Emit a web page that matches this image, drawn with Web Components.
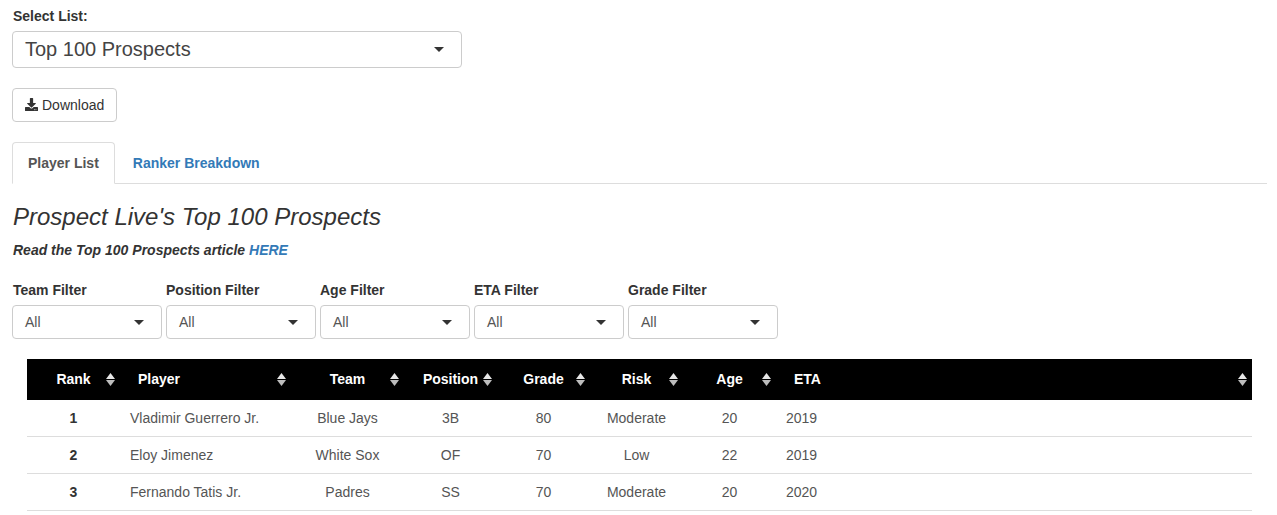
<!DOCTYPE html>
<html lang="en">
<head>
<meta charset="utf-8">
<title>Top 100 Prospects</title>
<style>
  html, body { margin: 0; background: #fff; overflow: hidden; }
  body { font: 14px/20px "Liberation Sans", Arial, sans-serif; color: #333; }
</style>
</head>
<body>
<prospect-app></prospect-app>
<script>
class SelectBox extends HTMLElement {
  constructor() {
    super();
    this.attachShadow({ mode: 'open' });
    const large = this.hasAttribute('large');
    this.shadowRoot.innerHTML = `
      <style>
        :host { display: block; width: ${large ? 450 : 150}px; }
        label { display: block; font-weight: 700; height: 20px; line-height: 20px; margin-bottom: 5px; padding-left: var(--label-inset, 0); color: #333; }
        .box {
          box-sizing: border-box;
          height: ${large ? 37 : 34}px;
          border: 1px solid #ccc;
          border-radius: 4px;
          background: #fff;
          color: ${large ? '#444' : '#555'};
          font-size: ${large ? 20 : 14}px;
          padding: 0 17px 0 12px;
          display: flex;
          align-items: center;
          justify-content: space-between;
        }
        .box span { margin-top: ${large ? -2 : 0}px; }
        .caret { width: 0; height: 0; border: 5px solid transparent; border-top: 5px solid #333; border-bottom: 0; }
      </style>
      <label>${this.getAttribute('label')}</label>
      <div class="box"><span><slot></slot></span><i class="caret"></i></div>
    `;
  }
}
customElements.define('select-box', SelectBox);

class DownloadButton extends HTMLElement {
  constructor() {
    super();
    this.attachShadow({ mode: 'open' });
    this.shadowRoot.innerHTML = `
      <style>
        :host { display: inline-flex; }
        button {
          box-sizing: border-box;
          height: 34px;
          width: 105px;
          padding: 0 0 0 12px;
          display: flex;
          align-items: center;
          gap: 4px;
          font: inherit;
          color: #333;
          background: #fff;
          border: 1px solid #ccc;
          border-radius: 4px;
        }
        svg { width: 13px; height: 13px; fill: #333; margin-top: -2px; }
      </style>
      <button>
        <svg viewBox="0 0 512 512"><path d="M216 0h80c13.3 0 24 10.7 24 24v168h87.7c17.8 0 26.7 21.5 14.1 34.1L269.7 378.3c-7.5 7.5-19.8 7.5-27.3 0L90.1 226.1c-12.6-12.6-3.7-34.1 14.1-34.1H192V24c0-13.3 10.7-24 24-24zm296 376v112c0 13.3-10.7 24-24 24H24c-13.3 0-24-10.7-24-24V376c0-13.3 10.7-24 24-24h146.7l49 49c20.1 20.1 52.5 20.1 72.6 0l49-49H488c13.3 0 24 10.7 24 24zm-124 88c0-11-9-20-20-20s-20 9-20 20 9 20 20 20 20-9 20-20zm64 0c0-11-9-20-20-20s-20 9-20 20 9 20 20 20 20-9 20-20z"></path></svg>
        <slot></slot>
      </button>
    `;
  }
}
customElements.define('download-button', DownloadButton);

class TabBar extends HTMLElement {
  constructor() {
    super();
    this.attachShadow({ mode: 'open' });
    this.shadowRoot.innerHTML = `
      <style>
        :host { display: flex; border-bottom: 1px solid #ddd; height: 41px; font-weight: 700; }
        .tab { box-sizing: border-box; height: 42px; padding: 10px 15px; margin-right: 2px; border: 1px solid transparent; border-radius: 4px 4px 0 0; color: #337ab7; white-space: nowrap; }
        .active { color: #555; background: #fff; border-color: #ddd #ddd #fff; }
      </style>
      <div class="tab active"><slot name="active"></slot></div>
      <div class="tab"><slot name="other"></slot></div>
    `;
  }
}
customElements.define('tab-bar', TabBar);

const COLUMNS = [
  ['Rank', 93], ['Player', 171, 'left'], ['Team', 113], ['Position', 93],
  ['Grade', 93], ['Risk', 93], ['Age', 93], ['ETA', 476, 'left']
];
const ROWS = [
  ['1', 'Vladimir Guerrero Jr.', 'Blue Jays', '3B', '80', 'Moderate', '20', '2019'],
  ['2', 'Eloy Jimenez', 'White Sox', 'OF', '70', 'Low', '22', '2019'],
  ['3', 'Fernando Tatis Jr.', 'Padres', 'SS', '70', 'Moderate', '20', '2020']
];

class PlayerTable extends HTMLElement {
  constructor() {
    super();
    this.attachShadow({ mode: 'open' });
    const sortIcon = `<svg class="sort" viewBox="0 0 9 13"><path fill="#e6e6e6" d="M4.5 0 9 6H0z"/><path fill="#bdbdbd" d="M0 7h9l-4.5 6z"/></svg>`;
    const head = COLUMNS.map(([name, , align]) => `<div class="th ${align || ''}">${name}${sortIcon}</div>`).join('');
    const body = ROWS.map(row => row.map((cell, i) =>
      `<div class="td ${COLUMNS[i][2] || ''} ${i === 0 ? 'rank' : ''}">${cell}</div>`).join('')).join('');
    this.shadowRoot.innerHTML = `
      <style>
        :host { display: block; margin: 0 15px; }
        .grid { display: grid; grid-template-columns: ${COLUMNS.map(c => c[1] + 'px').join(' ')}; }
        .th {
          position: relative;
          height: 41px;
          line-height: 41px;
          padding: 0 18px;
          box-sizing: border-box;
          background: #000;
          color: #fff;
          font-weight: 700;
          text-align: center;
        }
        .td {
          height: 37px;
          line-height: 36px;
          padding: 0 10px;
          box-sizing: border-box;
          border-bottom: 1px solid #ddd;
          color: #555;
          text-align: center;
          white-space: nowrap;
        }
        .left { text-align: left; }
        .rank { font-weight: 700; color: #333; }
        .sort { position: absolute; right: 5px; top: 14px; width: 9px; height: 13px; }
      </style>
      <div class="grid">${head}${body}</div>
    `;
  }
}
customElements.define('player-table', PlayerTable);

class ProspectApp extends HTMLElement {
  constructor() {
    super();
    this.attachShadow({ mode: 'open' });
    this.shadowRoot.innerHTML = `
      <style>
        :host { display: block; padding: 6px 10px 0 12px; }
        download-button { margin-top: 20px; }
        tab-bar { margin-top: 20px; }
        .actions { display: flex; }
        h3 { margin: 20px 0 0 1px; font-size: 24px; line-height: 26px; font-weight: 400; font-style: italic; color: #333; }
        h5 { margin: 10px 0 0 1px; font-size: 14px; line-height: 20px; font-style: italic; font-weight: 700; color: #333; }
        a { color: #337ab7; text-decoration: none; }
        .inset { --label-inset: 1px; }
        .filters { display: flex; gap: 4px; margin-top: 20px; }
        player-table { margin-top: 20px; margin-right: 5px; }
      </style>
      <select-box large class="inset" label="Select List:">Top 100 Prospects</select-box>
      <div class="actions"><download-button>Download</download-button></div>
      <tab-bar>
        <span slot="active">Player List</span>
        <span slot="other">Ranker Breakdown</span>
      </tab-bar>
      <h3>Prospect Live's Top 100 Prospects</h3>
      <h5>Read the Top 100 Prospects article <a href="#">HERE</a></h5>
      <div class="filters">
        <select-box class="inset" label="Team Filter">All</select-box>
        <select-box label="Position Filter">All</select-box>
        <select-box label="Age Filter">All</select-box>
        <select-box label="ETA Filter">All</select-box>
        <select-box label="Grade Filter">All</select-box>
      </div>
      <player-table></player-table>
    `;
  }
}
customElements.define('prospect-app', ProspectApp);
</script>
</body>
</html>
